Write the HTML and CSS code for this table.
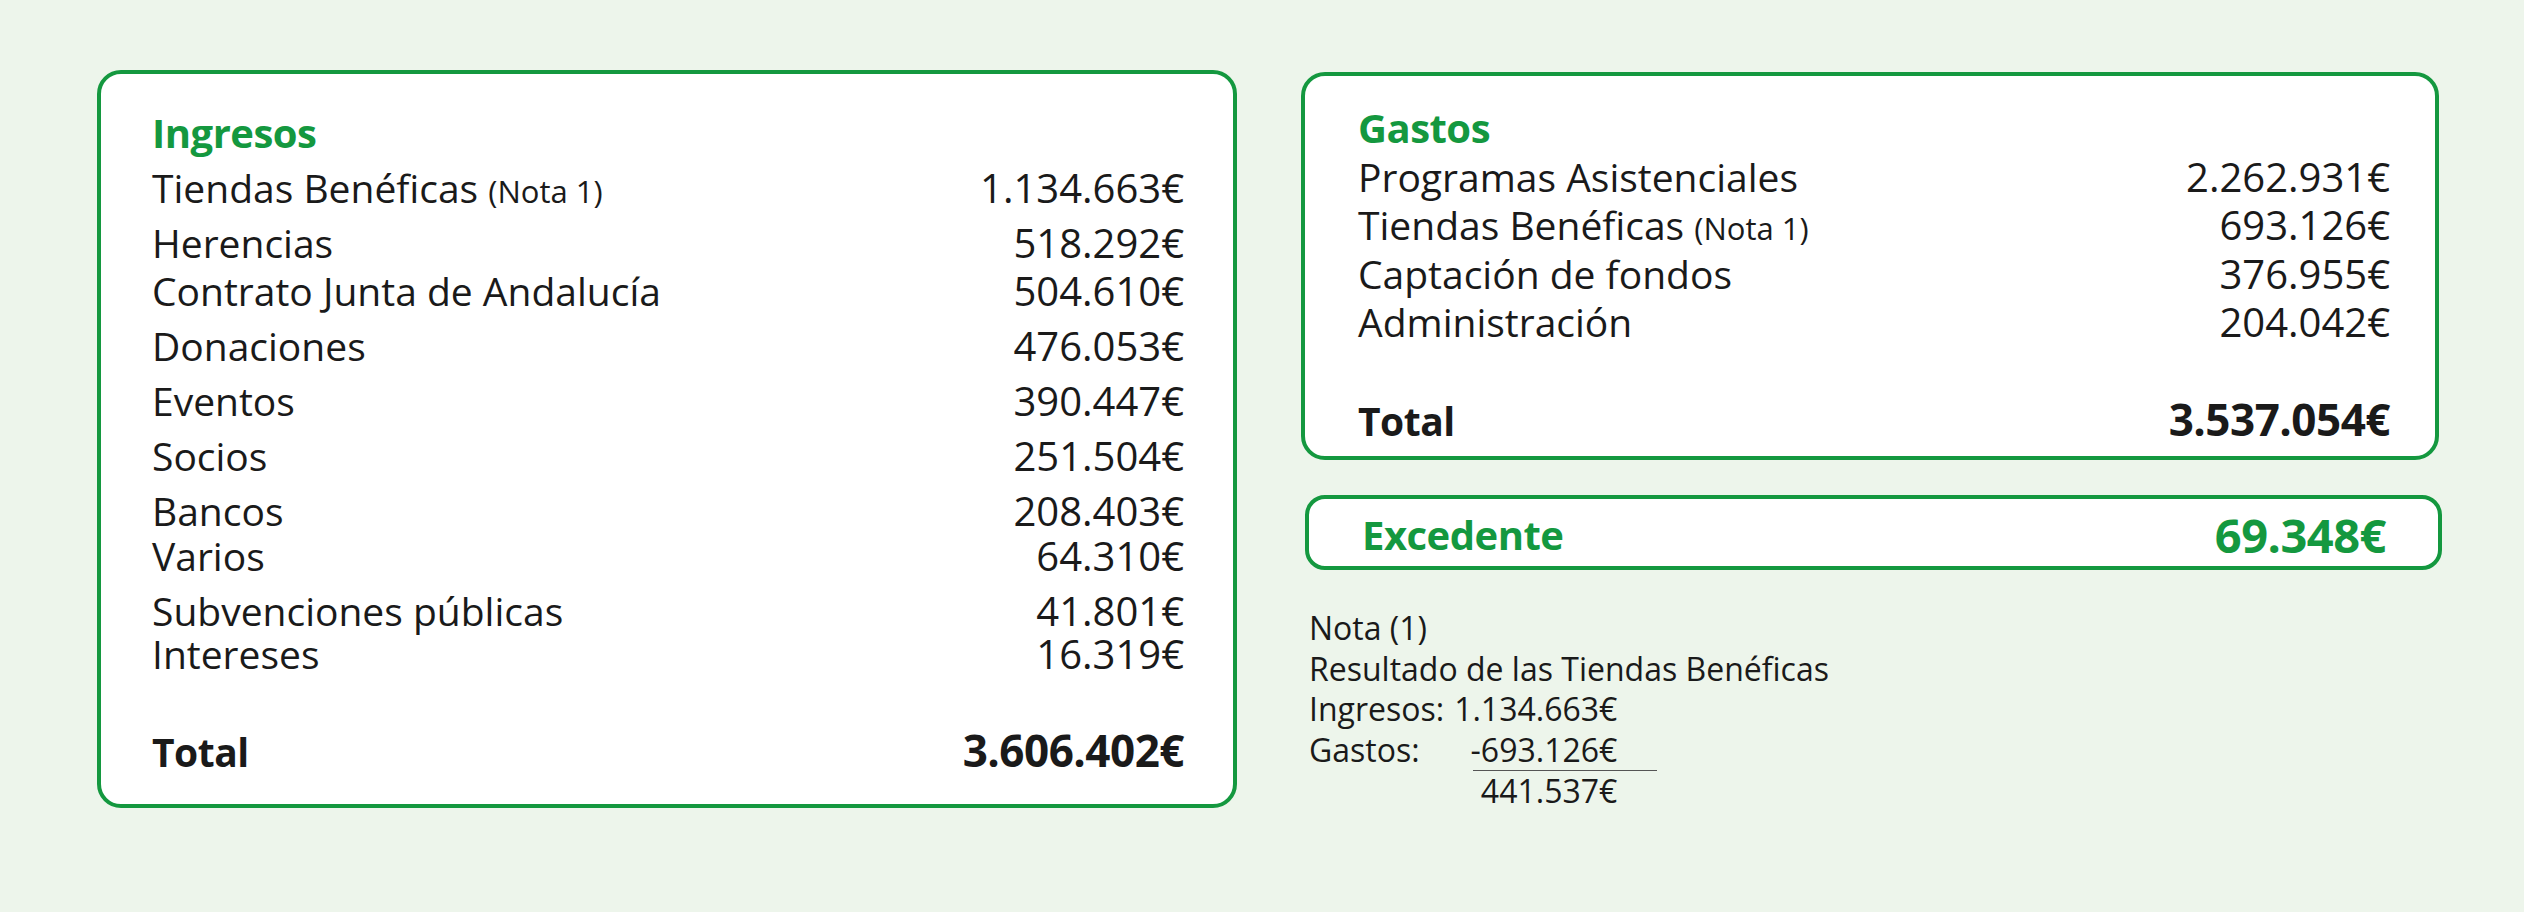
FILE: index.html
```html
<!DOCTYPE html>
<html lang="es">
<head>
<meta charset="utf-8">
<title>Ingresos y Gastos</title>
<link rel="stylesheet" href="styles.css">
</head>
<body>
<div class="page">
  <section class="card card-ingresos">
    <h2 class="heading">Ingresos</h2>
    <div class="row"><span class="label">Tiendas Benéficas <small class="note-ref">(Nota 1)</small></span><span class="num">1.134.663€</span></div>
    <div class="row"><span class="label">Herencias</span><span class="num">518.292€</span></div>
    <div class="row tight-s"><span class="label">Contrato Junta de Andalucía</span><span class="num">504.610€</span></div>
    <div class="row"><span class="label">Donaciones</span><span class="num">476.053€</span></div>
    <div class="row"><span class="label">Eventos</span><span class="num">390.447€</span></div>
    <div class="row"><span class="label">Socios</span><span class="num">251.504€</span></div>
    <div class="row"><span class="label">Bancos</span><span class="num">208.403€</span></div>
    <div class="row tight-m"><span class="label">Varios</span><span class="num">64.310€</span></div>
    <div class="row"><span class="label">Subvenciones públicas</span><span class="num">41.801€</span></div>
    <div class="row tight-l"><span class="label">Intereses</span><span class="num">16.319€</span></div>
    <div class="row total"><span class="label">Total</span><span class="num">3.606.402€</span></div>
  </section>

  <div class="right-col">
    <section class="card card-gastos">
      <h2 class="heading">Gastos</h2>
      <div class="row"><span class="label">Programas Asistenciales</span><span class="num">2.262.931€</span></div>
      <div class="row"><span class="label">Tiendas Benéficas <small class="note-ref">(Nota 1)</small></span><span class="num">693.126€</span></div>
      <div class="row"><span class="label">Captación de fondos</span><span class="num">376.955€</span></div>
      <div class="row"><span class="label">Administración</span><span class="num">204.042€</span></div>
      <div class="row total"><span class="label">Total</span><span class="num">3.537.054€</span></div>
    </section>

    <section class="card card-excedente">
      <span class="exc-label">Excedente</span>
      <span class="exc-num">69.348€</span>
    </section>

    <div class="nota">
      <p class="nota-line">Nota (1)</p>
      <p class="nota-line">Resultado de las Tiendas Benéficas</p>
      <div class="calc">
        <span class="calc-label">Ingresos:</span><span class="calc-val">1.134.663€</span>
        <span class="calc-label">Gastos:</span><span class="calc-val">-693.126€</span>
        <span class="calc-label"></span><span class="calc-val calc-result">441.537€</span>
      </div>
    </div>
  </div>
</div>
</body>
</html>
```

FILE: styles.css
```css
html, body {
  margin: 0;
  padding: 0;
}

body {
  background: #edf5eb;
  color: #1a1a1a;
  font-family: "Open Sans", "Liberation Sans", sans-serif;
  width: 2524px;
  height: 912px;
  overflow: hidden;
}

.page {
  display: flex;
  align-items: flex-start;
  gap: 64px;
  padding: 70px 0 0 97px;
}

.card {
  box-sizing: border-box;
  background: #ffffff;
  border: 4px solid #14983f;
  border-radius: 24px;
}

.heading {
  margin: 0;
  color: #14983f;
  font-size: 40px;
  font-weight: 700;
  letter-spacing: -0.5px;
  line-height: 44px;
}

.row {
  display: flex;
  justify-content: space-between;
  align-items: baseline;
  height: 44px;
  line-height: 44px;
}

.label {
  font-size: 39px;
  font-weight: 400;
}

.note-ref {
  font-size: 31px;
}

.num {
  font-size: 40px;
  font-weight: 400;
}

.total .label {
  font-size: 39px;
  font-weight: 700;
  letter-spacing: -0.5px;
}

.total .num {
  font-size: 44px;
  font-weight: 700;
  letter-spacing: -0.5px;
}

/* Ingresos card */
.card-ingresos {
  width: 1140px;
  height: 738px;
  padding: 37px 49px 0 51px;
}

.card-ingresos .row {
  margin-top: 11px;
}

.card-ingresos .tight-s {
  margin-top: 4px;
}

.card-ingresos .tight-m {
  margin-top: 1px;
}

.card-ingresos .tight-l {
  margin-top: -1px;
}

.card-ingresos .total {
  margin-top: 52px;
}

/* Right column */
.right-col {
  display: flex;
  flex-direction: column;
  width: 1141px;
}

.card-gastos {
  width: 1138px;
  height: 388px;
  margin-top: 2px;
  padding: 30px 45px 0 53px;
}

.card-gastos .row {
  margin-top: 4.5px;
}

.card-gastos .total {
  margin-top: 53px;
}

.card-excedente {
  width: 1137px;
  height: 75px;
  margin-top: 35px;
  margin-left: 4px;
  border-radius: 20px;
  display: flex;
  justify-content: space-between;
  align-items: center;
  padding: 4px 52px 0 53px;
  color: #14983f;
  font-weight: 700;
}

.exc-label {
  font-size: 40px;
  letter-spacing: -0.5px;
}

.exc-num {
  font-size: 47px;
  letter-spacing: -0.5px;
}

/* Nota */
.nota {
  margin-top: 38px;
  padding-left: 8px;
  font-size: 32px;
  line-height: 40.5px;
}

.nota-line {
  margin: 0;
}

.calc {
  display: grid;
  grid-template-columns: max-content max-content;
  justify-content: start;
}

.calc-label {
  padding-right: 10px;
}

.calc-val {
  text-align: right;
}

.calc-result {
  border-top: 1.5px solid #555;
  margin-left: 19px;
  margin-right: -40px;
  padding-right: 40px;
  line-height: 40px;
}
```
